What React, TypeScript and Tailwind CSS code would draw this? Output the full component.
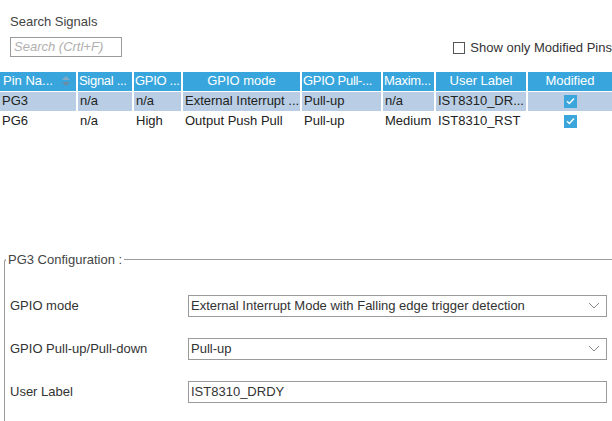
import React from "react";

const cols = "grid-cols-[76px_54px_47px_117px_79px_51px_90px_1fr]";

const headers = [
  "Pin Na...",
  "Signal ...",
  "GPIO ...",
  "GPIO mode",
  "GPIO Pull-...",
  "Maxim...",
  "User Label",
  "Modified",
];

const rows = [
  ["PG3", "n/a", "n/a", "External Interrupt ...", "Pull-up", "n/a", "IST8310_DR..."],
  ["PG6", "n/a", "High", "Output Push Pull", "Pull-up", "Medium", "IST8310_RST"],
];

function Check() {
  return (
    <span className="flex h-[13px] w-[13px] items-center justify-center bg-[#3ba6dc]">
      <svg width="9" height="8" viewBox="0 0 9 8">
        <path d="M1 4.2 L3.4 6.5 L8 1.5" fill="none" stroke="#fff" strokeWidth="1.4" />
      </svg>
    </span>
  );
}

function SortIcon() {
  return (
    <svg width="8" height="12" viewBox="0 0 8 12" className="ml-auto mr-[6px]">
      <path d="M0 5 L4 1 L8 5 Z" fill="#7fa9c4" />
      <path d="M0 7 L4 11 L8 7 Z" fill="#6c8aa0" />
    </svg>
  );
}

function Chevron() {
  return (
    <svg width="12" height="7" viewBox="0 0 12 7" className="mr-[6px]">
      <path d="M1 1 L6 6 L11 1" fill="none" stroke="#888" strokeWidth="1" />
    </svg>
  );
}

export default function App() {
  return (
    <div className="h-[421px] w-[612px] overflow-hidden bg-white font-['Liberation_Sans',Arial,sans-serif] text-[13px] text-[#333]">
      {/* search bar */}
      <div className="px-[10px] pt-[14px]">
        <div className="leading-[16px] text-[#444]">Search Signals</div>
        <div className="mt-[7px] flex items-start">
          <div className="flex h-[20px] w-[112px] items-center border border-[#9a9a9a] px-[3px] italic text-[#b0b0b0]">
            Search (Crtl+F)
          </div>
          <label className="ml-auto mr-[-10px] mt-[1px] flex items-center gap-[5px] whitespace-nowrap text-[#333]">
            <span className="h-[12px] w-[12px] border border-[#555] bg-white" />
            Show only Modified Pins
          </label>
        </div>
      </div>

      {/* table */}
      <div className="mt-[14px] flex flex-col gap-y-[1px]">
        <div className={`grid ${cols} h-[19px] gap-x-[2px]`}>
          {headers.map((h, i) => (
            <div
              key={h}
              className={`flex items-center overflow-hidden whitespace-nowrap bg-[#38a6dc] text-white ${
                i === 0 ? "pl-[3px]" : i === 1 || i === 2 || i === 4 || i === 5 ? "pl-[1px] tracking-[-0.3px]" : "justify-center"
              }`}
            >
              {h}
              {i === 0 && <SortIcon />}
            </div>
          ))}
        </div>
        {rows.map((r, ri) => (
          <div key={ri} className={`grid ${cols} h-[19px] gap-x-[2px] bg-white`}>
            {r.map((c, ci) => (
              <div
                key={ci}
                className={`flex items-center overflow-hidden whitespace-nowrap pl-[2px] text-[#222] ${
                  ri === 0 ? "bg-[#b9cee4]" : ""
                }`}
              >
                {c}
              </div>
            ))}
            <div className={`flex items-center justify-center ${ri === 0 ? "bg-[#b9cee4]" : ""}`}>
              <Check />
            </div>
          </div>
        ))}
      </div>

      {/* configuration */}
      <fieldset className="mt-[122px] ml-[4px] mr-[-4px] h-[200px] rounded-tl-[3px] border-l border-t border-[#9a9a9a] pl-0 pt-[28px] pr-[9px]">
        <legend className="ml-[1px] px-[2px] leading-[14px] text-[#444]">PG3 Configuration :</legend>
        <div className="flex flex-col gap-y-[21px] pl-[5px]">
          <div className="flex items-center">
            <span className="w-[178px]">GPIO mode</span>
            <div className="flex h-[22px] flex-1 items-center border border-[#9a9a9a] pl-[2px]">
              <span className="flex-1">External Interrupt Mode with Falling edge trigger detection</span>
              <Chevron />
            </div>
          </div>
          <div className="flex items-center">
            <span className="w-[178px]">GPIO Pull-up/Pull-down</span>
            <div className="flex h-[22px] flex-1 items-center border border-[#9a9a9a] pl-[2px]">
              <span className="flex-1">Pull-up</span>
              <Chevron />
            </div>
          </div>
          <div className="flex items-center">
            <span className="w-[178px]">User Label</span>
            <div className="flex h-[22px] flex-1 items-center border border-[#9a9a9a] pl-[2px]">
              IST8310_DRDY
            </div>
          </div>
        </div>
      </fieldset>
    </div>
  );
}
